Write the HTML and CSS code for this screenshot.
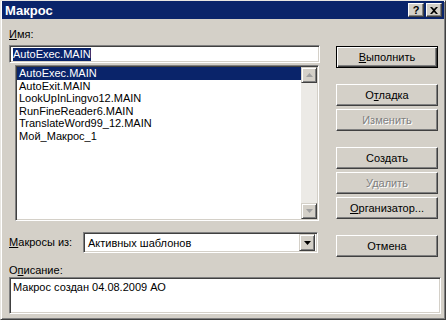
FILE: index.html
```html
<!DOCTYPE html>
<html lang="ru">
<head>
  <meta charset="UTF-8">
  <title>Макрос</title>
  <link rel="stylesheet" href="styles.css">
</head>
<body>
  <div class="window">
    <div class="titlebar">
      <span class="title">Макрос</span>
      <div class="title-buttons">
        <span class="tbtn">?</span>
        <span class="tbtn tclose">
          <svg width="8" height="7" viewBox="0 0 8 7"><path d="M0 0h2l2 2 2-2h2L5 3.5 8 7H6L4 5 2 7H0l3-3.5z" fill="#000"/></svg>
        </span>
      </div>
    </div>

    <div class="content">
      <div class="main">
        <div class="left">
          <div class="label"><u>И</u>мя:</div>
          <div class="field name-field"><span class="sel">AutoExec.MAIN</span></div>
          <div class="listbox">
            <ul class="items">
              <li class="selected">AutoExec.MAIN</li>
              <li>AutoExit.MAIN</li>
              <li>LookUpInLingvo12.MAIN</li>
              <li>RunFineReader6.MAIN</li>
              <li>TranslateWord99_12.MAIN</li>
              <li>Мой_Макрос_1</li>
            </ul>
            <div class="scrollbar">
              <span class="sbtn">
                <svg width="7" height="4" viewBox="0 0 7 4"><path d="M3.5 0L7 4H0z" fill="#a0a0a0"/></svg>
              </span>
              <span class="track"></span>
              <span class="sbtn">
                <svg width="7" height="4" viewBox="0 0 7 4"><path d="M0 0h7L3.5 4z" fill="#a0a0a0"/></svg>
              </span>
            </div>
          </div>
          <div class="combo-row">
            <span class="label combo-label"><u>М</u>акросы из:</span>
            <div class="combo">
              <span class="combo-text">Активных шаблонов</span>
              <span class="sbtn combo-btn">
                <svg width="7" height="4" viewBox="0 0 7 4"><path d="M0 0h7L3.5 4z" fill="#000"/></svg>
              </span>
            </div>
          </div>
        </div>

        <div class="right">
          <button class="btn default"><u>В</u>ыполнить</button>
          <button class="btn gap-big">О<u>т</u>ладка</button>
          <button class="btn gap-small" disabled>Изменить</button>
          <button class="btn gap-big">Соз<u>д</u>ать</button>
          <button class="btn gap-small" disabled>Удалить</button>
          <button class="btn gap-small"><u>О</u>рганизатор...</button>
          <button class="btn gap-big">Отмена</button>
        </div>
      </div>

      <div class="label desc-label">О<u>п</u>исание:</div>
      <div class="field desc">Макрос создан 04.08.2009 АО</div>
    </div>
  </div>
</body>
</html>
```

FILE: styles.css
```css
body {
  margin: 0;
  background: #d4d0c8;
  font-family: "Liberation Sans", Arial, sans-serif;
  font-size: 11px;
  color: #000;
}
.window {
  width: 446px;
  height: 320px;
  box-sizing: border-box;
  background: #d4d0c8;
  border: 1px solid;
  border-color: #e8e6e1 #404040 #404040 #e8e6e1;
  box-shadow: inset 1px 1px #fff, inset -1px -1px #808080;
  padding: 0 1px;
}
.titlebar {
  height: 18px;
  background: #0a246a;
  display: flex;
  align-items: center;
  justify-content: space-between;
  padding: 0 2px 0 3px;
}
.title {
  color: #fff;
  font-weight: bold;
  font-size: 13px;
}
.title-buttons {
  display: flex;
  gap: 2px;
}
.tbtn {
  width: 16px;
  height: 14px;
  box-sizing: border-box;
  background: #d4d0c8;
  border: 1px solid;
  border-color: #fff #404040 #404040 #fff;
  box-shadow: inset -1px -1px #808080;
  display: flex;
  align-items: center;
  justify-content: center;
  font-weight: bold;
  font-size: 11px;
  line-height: 1;
}
.content {
  padding: 9px 0 0 7px;
}
.main {
  display: flex;
  align-items: flex-start;
  gap: 16px;
}
.left {
  width: 311px;
}
.label {
  line-height: 13px;
  height: 13px;
}
.field {
  box-sizing: border-box;
  background: #fff;
  border: 1px solid;
  border-color: #808080 #fff #fff #808080;
  box-shadow: inset 1px 1px #404040, inset -1px -1px #d4d0c8;
}
.name-field {
  margin-top: 4px;
  height: 18px;
  padding: 2px 0 0 3px;
  line-height: 13px;
}
.sel {
  background: #0a246a;
  color: #fff;
  display: inline-block;
}
.listbox {
  margin: 2px 0 0 6px;
  width: 304px;
  height: 156px;
  box-sizing: border-box;
  background: #fff;
  border: 1px solid;
  border-color: #808080 #fff #fff #808080;
  box-shadow: inset 1px 1px #404040, inset -1px -1px #d4d0c8;
  padding: 1px 1px 1px 1px;
  display: flex;
}
.items {
  list-style: none;
  margin: 0;
  padding: 0;
  flex: 1;
}
.items li {
  height: 12.6px;
  line-height: 13px;
  padding-left: 2px;
}
.items li.selected {
  background: #0a246a;
  color: #fff;
}
.scrollbar {
  width: 16px;
  display: flex;
  flex-direction: column;
}
.track {
  flex: 1;
  background: #eceae6;
}
.sbtn {
  width: 16px;
  height: 16px;
  box-sizing: border-box;
  background: #d4d0c8;
  border: 1px solid;
  border-color: #d4d0c8 #404040 #404040 #d4d0c8;
  box-shadow: inset 1px 1px #fff, inset -1px -1px #808080;
  display: flex;
  align-items: center;
  justify-content: center;
}
.combo-row {
  margin-top: 11px;
  display: flex;
  align-items: center;
}
.combo-label {
  width: 74px;
}
.combo {
  width: 235px;
  height: 21px;
  box-sizing: border-box;
  background: #fff;
  border: 1px solid;
  border-color: #808080 #fff #fff #808080;
  box-shadow: inset 1px 1px #404040, inset -1px -1px #d4d0c8;
  padding: 2px;
  display: flex;
  align-items: center;
}
.combo-text {
  flex: 1;
  padding-left: 2px;
}
.combo-btn {
  height: 17px;
}
.right {
  width: 102px;
  padding-top: 18px;
  display: flex;
  flex-direction: column;
}
.btn {
  height: 22px;
  box-sizing: border-box;
  background: #d4d0c8;
  font-family: "Liberation Sans", Arial, sans-serif;
  font-size: 11px;
  color: #000;
  border: 1px solid;
  border-color: #fff #404040 #404040 #fff;
  box-shadow: inset -1px -1px #808080;
  padding: 0;
}
.btn.default {
  border: 1px solid #000;
  box-shadow: inset 1px 1px #fff, inset -1px -1px #404040, inset -2px -2px #808080;
}
.btn:disabled {
  color: #808080;
  text-shadow: 1px 1px #fff;
}
.gap-big {
  margin-top: 16px;
}
.gap-small {
  margin-top: 3px;
}
.desc-label {
  margin-top: 7px;
}
.desc {
  width: 432px;
  height: 37px;
  padding: 3px 0 0 3px;
}
```
